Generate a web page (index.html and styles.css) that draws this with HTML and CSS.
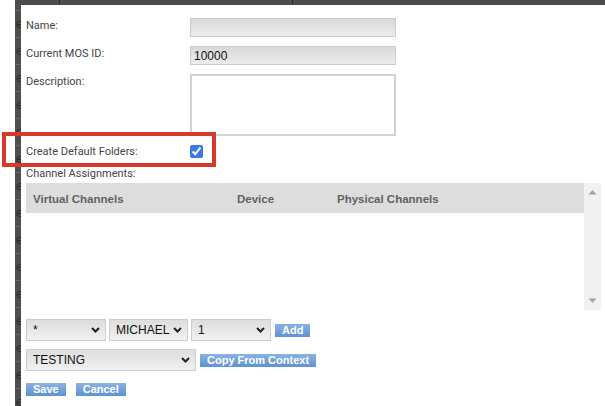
FILE: index.html
```html
<!DOCTYPE html>
<html>
<head>
<title>Edit Show</title>
<link rel="stylesheet" href="styles.css">
</head>
<body>

<div class="page">
  <div class="gutter"></div>
  <div class="backdrop">
    <div class="topbar">
      <div class="topcol first"></div>
      <div class="topcol second"></div>
      <div class="topcol"></div>
    </div>
    <div class="behind">
      <div class="strip">
        <div class="strip-row">e</div>
        <div class="strip-row">e</div>
        <div class="strip-row">e</div>
        <div class="strip-row">e</div>
        <div class="strip-row">e</div>
        <div class="strip-row">e</div>
        <div class="strip-row">e</div>
        <div class="strip-row">e</div>
        <div class="strip-row">e</div>
        <div class="strip-row">e</div>
        <div class="strip-row">e</div>
        <div class="strip-row">e</div>
        <div class="strip-row">e</div>
        <div class="strip-row">e</div>
        <div class="strip-row">e</div>
      </div>

      <div class="dialog">
        <div class="field">
          <label class="label">Name:</label>
          <input class="text-input" type="text" value="">
        </div>
        <div class="field gap10">
          <label class="label">Current MOS ID:</label>
          <input class="text-input" type="text" value="10000">
        </div>
        <div class="field">
          <label class="label">Description:</label>
          <textarea class="text-area"></textarea>
        </div>
        <div class="field">
          <label class="label tight">Create Default Folders:</label>
          <input class="check" type="checkbox" checked>
        </div>

        <div class="section-title">Channel Assignments:</div>

        <div class="grid">
          <div class="grid-body">
            <div class="grid-head">
              <div>Virtual Channels</div>
              <div>Device</div>
              <div>Physical Channels</div>
            </div>
          </div>
          <div class="scrollbar">
            <svg width="9" height="6" viewBox="0 0 9 6"><path d="M0.5 5.5 L4.5 1 L8.5 5.5 Z" fill="#a3a3a3"/></svg>
            <svg width="9" height="6" viewBox="0 0 9 6"><path d="M0.5 0.5 L4.5 5 L8.5 0.5 Z" fill="#a3a3a3"/></svg>
          </div>
        </div>

        <div class="controls">
          <span class="select-wrap w80">
            <select class="select"><option>*</option></select>
            <svg class="chev" width="9" height="6" viewBox="0 0 9 6"><path d="M1 1 L4.5 4.5 L8 1" fill="none" stroke="#222" stroke-width="2"/></svg>
          </span>
          <span class="select-wrap w79">
            <select class="select"><option>MICHAEL</option></select>
            <svg class="chev" width="9" height="6" viewBox="0 0 9 6"><path d="M1 1 L4.5 4.5 L8 1" fill="none" stroke="#222" stroke-width="2"/></svg>
          </span>
          <span class="select-wrap w80">
            <select class="select"><option>1</option></select>
            <svg class="chev" width="9" height="6" viewBox="0 0 9 6"><path d="M1 1 L4.5 4.5 L8 1" fill="none" stroke="#222" stroke-width="2"/></svg>
          </span>
          <button class="btn">Add</button>
        </div>

        <div class="controls second-row">
          <span class="select-wrap w170">
            <select class="select"><option>TESTING</option></select>
            <svg class="chev" width="9" height="6" viewBox="0 0 9 6"><path d="M1 1 L4.5 4.5 L8 1" fill="none" stroke="#222" stroke-width="2"/></svg>
          </span>
          <button class="btn">Copy From Context</button>
        </div>

        <div class="actions">
          <button class="btn">Save</button>
          <button class="btn">Cancel</button>
        </div>
      </div>
    </div>
  </div>

  <!-- highlight box drawn over the screenshot -->
  <div class="callout"></div>
</div>

</body>
</html>
```

FILE: styles.css
```css
* {
  box-sizing: border-box;
}

body {
  margin: 0;
  background: #fff;
  font-family: 'Roboto', 'Liberation Sans', sans-serif;
  overflow: hidden;
}

.page {
  display: flex;
  width: 605px;
  height: 406px;
  position: relative;
}

.gutter {
  width: 15px;
  background: #fff;
}

.backdrop {
  flex: 1;
  display: flex;
  flex-direction: column;
  background: #4b4b4b;
}

.topbar {
  height: 5px;
  display: flex;
}

.topcol {
  flex: 1;
}

.topcol.first {
  flex: none;
  width: 45px;
  border-right: 1px solid #2e2e2e;
}

.topcol.second {
  flex: none;
  width: 233px;
  border-right: 1px solid #2e2e2e;
}

.behind {
  flex: 1;
  display: flex;
  min-height: 0;
}

/* the table rows of the page behind the dialog */
.strip {
  width: 6px;
  padding-top: 5px;
  overflow: hidden;
  background: #4f4f4f;
}

.strip-row {
  height: 27px;
  border-top: 1px solid #686868;
  font-family: 'Liberation Sans', sans-serif;
  font-size: 13px;
  line-height: 26px;
  color: #2c2c2c;
  padding-left: 1px;
}

.dialog {
  flex: 1;
  background: #fff;
  padding: 13px 0 0 5px;
  font-size: 11px;
  color: #444;
}

.field {
  display: grid;
  grid-template-columns: 164px 206px;
  align-items: start;
  margin-bottom: 9px;
}

.field.gap10 {
  margin-top: 1px;
}

.label {
  line-height: 13px;
  padding-top: 1px;
}

.label.tight {
  padding-top: 0;
}

.text-input {
  height: 19px;
  width: 206px;
  margin: 0;
  border: 1px solid #cbcbcb;
  background: linear-gradient(#d9d9d9, #ececec);
  font-family: 'Liberation Sans', sans-serif;
  font-size: 12px;
  color: #111;
  padding: 0 3px;
}

.text-area {
  height: 62px;
  width: 206px;
  margin: 0;
  border: 2px solid #d2d2d2;
  background: #fff;
  resize: none;
}

.check {
  width: 13px;
  height: 13px;
  margin: 0;
  accent-color: #3b7ae6;
}

.section-title {
  margin-top: 0;
  line-height: 13px;
}

.grid {
  display: flex;
  width: 575px;
  height: 127px;
  margin-top: 3px;
}

.grid-body {
  flex: 1;
  background: #fff;
}

.grid-head {
  height: 30px;
  background: #dddddd;
  display: grid;
  grid-template-columns: 204px 100px 1fr;
  align-items: center;
  padding-left: 7px;
  padding-top: 1px;
  font-family: 'Liberation Sans', sans-serif;
  font-weight: bold;
  font-size: 11.5px;
  color: #626262;
}

.scrollbar {
  width: 17px;
  background: #f1f1f1;
  display: flex;
  flex-direction: column;
  justify-content: space-between;
  align-items: center;
  padding: 6px 0 6px;
}

.controls {
  display: flex;
  align-items: center;
  gap: 3px;
  margin-top: 9px;
}

.controls.second-row {
  margin-top: 8px;
}

.select-wrap {
  position: relative;
  display: block;
  height: 22px;
}

.w80 { width: 80px; }
.w79 { width: 79px; }
.w170 { width: 170px; }

.select {
  appearance: none;
  -webkit-appearance: none;
  width: 100%;
  height: 22px;
  margin: 0;
  border: 1px solid #cdcdcd;
  border-radius: 0;
  background: linear-gradient(#dedede, #f0f0f0);
  font-family: 'Liberation Sans', sans-serif;
  font-size: 12px;
  color: #111;
  padding: 0 0 0 6px;
}

.chev {
  position: absolute;
  right: 6px;
  top: 8px;
}

.btn {
  border: none;
  margin: 0;
  height: 13px;
  padding: 0 7px;
  background: linear-gradient(#8ab3e2, #5e92d2);
  color: #fff;
  font-family: 'Liberation Sans', sans-serif;
  font-weight: bold;
  font-size: 11px;
  line-height: 13px;
  cursor: pointer;
}

.controls .btn {
  margin-left: 1px;
}

.actions {
  display: flex;
  gap: 10px;
  margin-top: 12px;
}

.callout {
  position: absolute;
  left: 2px;
  top: 132px;
  width: 214px;
  height: 35px;
  border: 4px solid #d7392b;
}
```
